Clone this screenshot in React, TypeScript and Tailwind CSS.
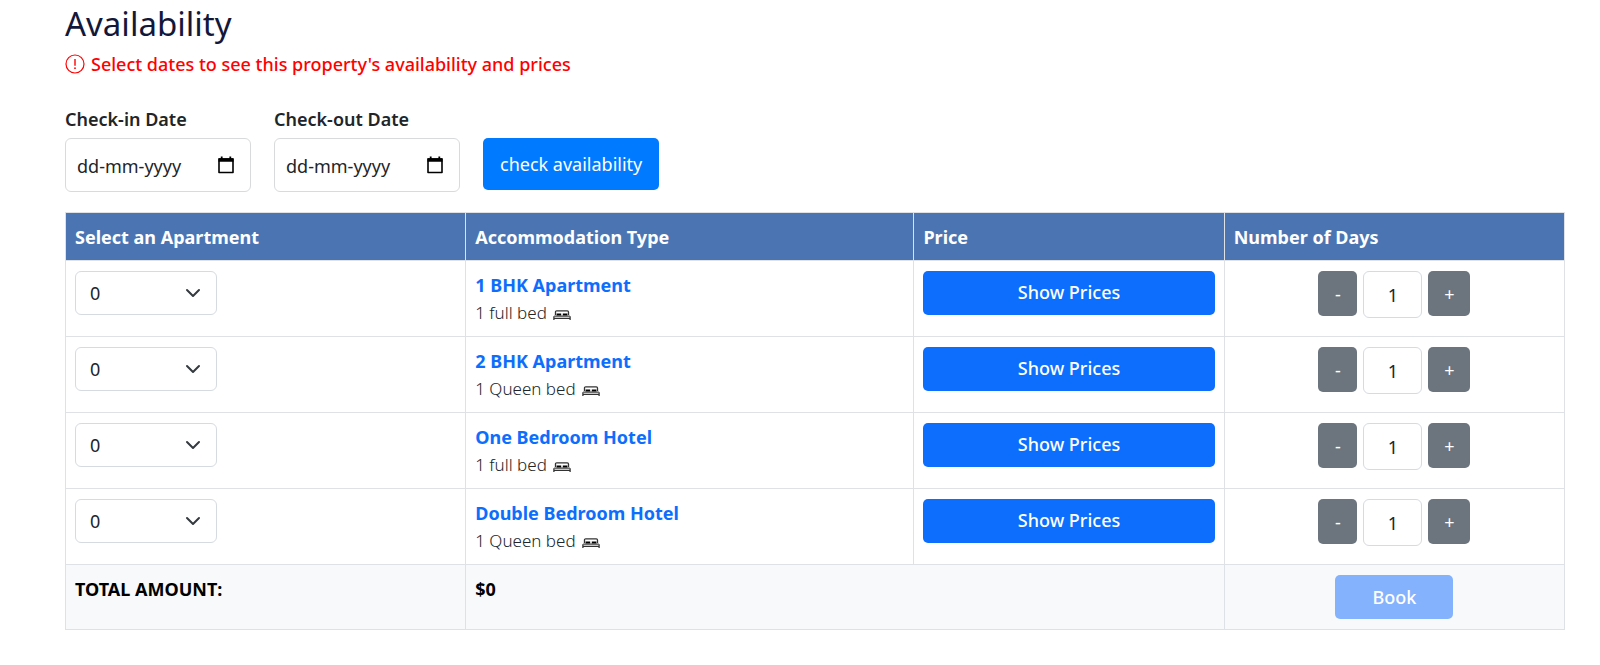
import React, { useState } from 'react';

interface Apartment {
    id: number;
    name: string;
    beds: string;
}

const apartments: Apartment[] = [
    { id: 1, name: '1 BHK Apartment', beds: '1 full bed' },
    { id: 2, name: '2 BHK Apartment', beds: '1 Queen bed' },
    { id: 3, name: 'One Bedroom Hotel', beds: '1 full bed' },
    { id: 4, name: 'Double Bedroom Hotel', beds: '1 Queen bed' },
];

const AlertIcon = () => (
    <svg viewBox="0 0 20 20" className="h-5 w-5" fill="none" stroke="currentColor" strokeWidth="1.2" aria-hidden="true">
        <circle cx="10" cy="10" r="9" />
        <path d="M10 5v6.8" strokeWidth="1.4" />
        <circle cx="10" cy="14.2" r="0.9" fill="currentColor" stroke="none" />
    </svg>
);

const CalendarIcon = () => (
    <svg viewBox="0 0 16 18" className="h-[18px] w-4" fill="none" aria-hidden="true">
        <path d="M1 3h14v13.5H1z" stroke="#000" strokeWidth="1.6" strokeLinejoin="round" />
        <path d="M0.5 2.2h15v3.6H0.5zM2.8 0.5h1.8v2.5H2.8zM11.4 0.5h1.8v2.5h-1.8z" fill="#000" />
    </svg>
);

const BedIcon = () => (
    <svg viewBox="0 0 18 10" className="h-2.5 w-[18px]" fill="none" aria-hidden="true">
        <path d="M2.5 5V2Q2.5 0.8 3.7 0.8h10.6Q15.5 0.8 15.5 2V5" stroke="#333" strokeWidth="1.3" />
        <path d="M3.6 3.6h4.6v2H3.6zM9.8 3.6h4.6v2H9.8z" fill="#000" />
        <path d="M1.2 6.1h15.6" stroke="#222" strokeWidth="1.1" />
        <path d="M0.9 10V6.2M17.1 10V6.2M0.9 8.4h16.2" stroke="#333" strokeWidth="1.3" />
    </svg>
);

const ChevronIcon = () => (
    <svg
        viewBox="0 0 16 16"
        className="pointer-events-none absolute right-4 top-3.5 h-4 w-4"
        fill="none"
        stroke="#343a40"
        strokeWidth="2"
        strokeLinecap="round"
        strokeLinejoin="round"
        aria-hidden="true"
    >
        <path d="m2 5 6 6 6-6" />
    </svg>
);

interface DateFieldProps {
    id: string;
    label: string;
    value: string;
    onChange: (value: string) => void;
}

const DateField: React.FC<DateFieldProps> = ({ id, label, value, onChange }) => (
    <div className="w-[186px]">
        <label htmlFor={id} className="mb-[5px] block font-semibold">{label}</label>
        <div className="flex h-[54px] items-center justify-between rounded-md border border-[#d9dadb] pl-[11px] pr-4">
            <input
                id={id}
                type="text"
                placeholder="dd-mm-yyyy"
                value={value}
                onChange={e => onChange(e.target.value)}
                className="min-w-0 flex-1 pt-0.5 outline-none placeholder:text-[#212529]"
            />
            <CalendarIcon />
        </div>
    </div>
);

const ApartmentRow: React.FC<{ apartment: Apartment }> = ({ apartment }) => {
    const [rooms, setRooms] = useState('0');
    const [days, setDays] = useState(1);

    return (
        <tr className="align-top">
            <td className="border border-[#dee2e6] px-[9px] py-2.5">
                <div className="relative w-[142px]">
                    <select
                        aria-label={`Rooms for ${apartment.name}`}
                        value={rooms}
                        onChange={e => setRooms(e.target.value)}
                        className="h-11 w-full appearance-none rounded-md border border-[#d5dbe0] bg-white pl-3.5"
                    >
                        {['0', '1', '2', '3'].map(n => <option key={n} value={n}>{n}</option>)}
                    </select>
                    <ChevronIcon />
                </div>
            </td>
            <td className="border border-[#dee2e6] px-[9px] pb-[9px] pt-2.5">
                <a href="#" className="block font-bold leading-7 text-[#0d6efd]">{apartment.name}</a>
                <div className="flex items-center gap-1.5 text-[17px] font-light leading-7">
                    <span>{apartment.beds}</span>
                    <span className="pt-1"><BedIcon /></span>
                </div>
            </td>
            <td className="border border-[#dee2e6] px-[9px] py-2.5">
                <button type="button" className="h-11 w-full rounded-[5px] bg-[#0d6efd] pb-0.5 font-medium text-white">
                    Show Prices
                </button>
            </td>
            <td className="border border-[#dee2e6] px-[9px] py-2.5">
                <div className="flex items-start justify-center gap-1.5">
                    <button
                        type="button"
                        aria-label="Fewer days"
                        onClick={() => setDays(d => Math.max(1, d - 1))}
                        className="h-[45px] w-[39px] rounded-[5px] bg-[#6c757d] text-white"
                    >
                        -
                    </button>
                    <input
                        type="text"
                        aria-label={`Days in ${apartment.name}`}
                        value={days}
                        onChange={e => setDays(Number(e.target.value) || 1)}
                        className="h-[47px] w-[59px] rounded-md border border-[#d5dbe0] text-center"
                    />
                    <button
                        type="button"
                        aria-label="More days"
                        onClick={() => setDays(d => d + 1)}
                        className="h-[45px] w-[42px] rounded-[5px] bg-[#6c757d] text-white"
                    >
                        +
                    </button>
                </div>
            </td>
        </tr>
    );
};

const App: React.FC = () => {
    const [checkIn, setCheckIn] = useState('');
    const [checkOut, setCheckOut] = useState('');

    return (
        <main className="bg-white pl-[65px] pr-[35px] font-['Noto_Sans',sans-serif] text-[18px] leading-7 text-[#212529]">
            <h1 className="pt-1 text-[33px] leading-10 text-[#12183a]">Availability</h1>
            <p className="mt-1.5 flex items-center gap-1.5 font-medium text-[#ff0000]">
                <AlertIcon />
                Select dates to see this property's availability and prices
            </p>

            <form className="mt-[27px] flex items-end gap-[23px]" onSubmit={e => e.preventDefault()}>
                <DateField id="check-in" label="Check-in Date" value={checkIn} onChange={setCheckIn} />
                <DateField id="check-out" label="Check-out Date" value={checkOut} onChange={setCheckOut} />
                <button type="submit" className="mb-0.5 h-[52px] rounded-[5px] bg-[#007bff] px-[17px] text-white">
                    check availability
                </button>
            </form>

            <table className="mt-5 w-full table-fixed border-collapse">
                <colgroup>
                    <col className="w-[26.7%]" />
                    <col className="w-[29.9%]" />
                    <col className="w-[20.7%]" />
                    <col className="w-[22.7%]" />
                </colgroup>
                <thead>
                    <tr className="bg-[#4b75b2] text-left text-white">
                        {['Select an Apartment', 'Accommodation Type', 'Price', 'Number of Days'].map(title => (
                            <th key={title} className="border border-[#dee2e6] px-[9px] pb-[9px] pt-2.5 font-bold">{title}</th>
                        ))}
                    </tr>
                </thead>
                <tbody>
                    {apartments.map(apartment => <ApartmentRow key={apartment.id} apartment={apartment} />)}
                </tbody>
                <tfoot>
                    <tr className="bg-[#f8f9fa] align-top font-bold text-black">
                        <td className="border border-[#dee2e6] px-[9px] py-2.5">TOTAL AMOUNT:</td>
                        <td colSpan={2} className="border border-[#dee2e6] px-[9px] py-2.5">$0</td>
                        <td className="border border-[#dee2e6] px-[9px] py-2.5 text-center">
                            <button type="button" disabled className="mx-auto block h-11 w-[118px] rounded-[5px] bg-[#84b2fd] font-medium text-white">
                                Book
                            </button>
                        </td>
                    </tr>
                </tfoot>
            </table>
        </main>
    );
};

export default App;
